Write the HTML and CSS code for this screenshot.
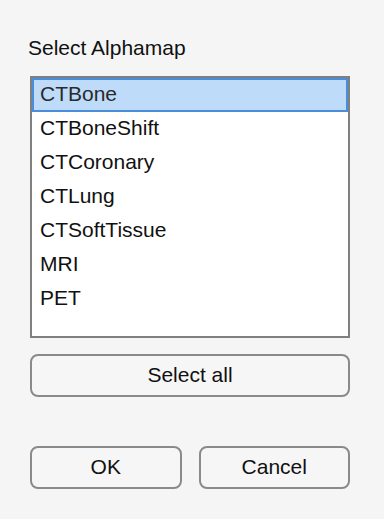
FILE: index.html
```html
<!DOCTYPE html>
<html lang="en">
<head>
  <meta charset="UTF-8" />
  <meta name="viewport" content="width=device-width, initial-scale=1.0" />
  <title>Select Alphamap</title>
  <link rel="stylesheet" href="styles.css">
</head>
<body>
  <div class="dialog">
    <div class="label">Select Alphamap</div>

    <ul class="listbox">
      <li class="selected">CTBone</li>
      <li>CTBoneShift</li>
      <li>CTCoronary</li>
      <li>CTLung</li>
      <li>CTSoftTissue</li>
      <li>MRI</li>
      <li>PET</li>
    </ul>

    <button class="btn wide">Select all</button>

    <div class="actions">
      <button class="btn">OK</button>
      <button class="btn">Cancel</button>
    </div>
  </div>
</body>
</html>
```

FILE: styles.css
```css
body {
  margin: 0;
  background: #f5f5f5;
  font-family: "Liberation Sans", Arial, sans-serif;
  font-size: 21px;
  color: #111;
}
.dialog {
  width: 320px;
  padding: 36px 34px 0 30px;
}
.label {
  line-height: 24px;
  margin-bottom: 16px;
  margin-left: -2px;
}
.listbox {
  list-style: none;
  margin: 0;
  padding: 0;
  height: 262px;
  box-sizing: border-box;
  border: 2px solid #808080;
  background: white;
}
.listbox li {
  height: 34px;
  line-height: 32px;
  padding-left: 8px;
  box-sizing: border-box;
}
.listbox li.selected {
  background: #bedcf9;
  border: 2px solid #4a8edb;
  padding-left: 6px;
  line-height: 28px;
  color: #2a2a2a;
}
.btn {
  display: block;
  height: 43px;
  border: 2px solid #8a8a8a;
  border-radius: 8px;
  background: #f6f6f6;
  font-family: inherit;
  font-size: 21px;
  color: #111;
  padding: 0 0 2px;
}
.wide {
  width: 100%;
  margin-top: 16px;
}
.actions {
  display: flex;
  gap: 17px;
  margin-top: 49px;
}
.actions .btn {
  flex: 1;
}
```
